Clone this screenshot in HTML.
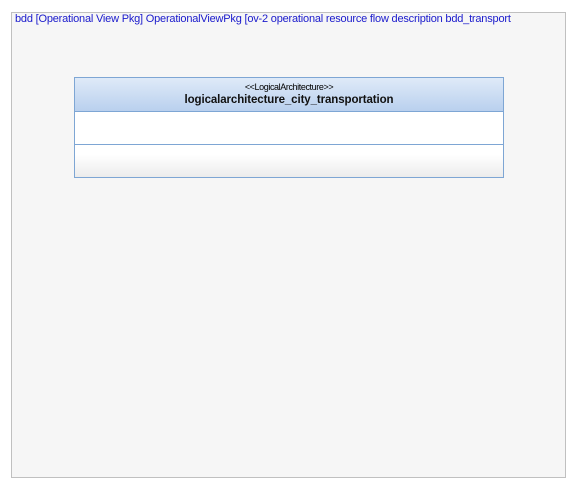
<!DOCTYPE html>
<html><head><meta charset="utf-8"><style>
body{margin:0;width:576px;height:488px;background:#fff;position:relative;overflow:hidden;font-family:"Liberation Sans",sans-serif}
.frame{position:absolute;left:11px;top:12px;width:553px;height:464px;border:1px solid #c0c0c0;background:#f6f6f6}
.title{position:absolute;left:12px;top:13px;height:13px;padding:0 0 0 3px;font-size:11px;line-height:13px;color:#1a1acc;white-space:nowrap;letter-spacing:-0.2px;width:497px;overflow:hidden}
.box{position:absolute;left:74px;top:77px;width:428px;height:99px;border:1px solid #7ea6d4;background:#fff;overflow:hidden}
.hdr{height:33px;border-bottom:1px solid #7ea6d4;background:linear-gradient(#dfeaf8,#b9d0ee);text-align:center}
.st{font-size:9px;line-height:10px;padding-top:4px;color:#000;letter-spacing:-0.4px}
.nm{font-size:11.5px;font-weight:bold;line-height:14px;color:#111;letter-spacing:-0.1px;padding-top:1px}
.c1{height:32px;border-bottom:1px solid #7ea6d4;background:#fff}
.c2{height:32px;background:linear-gradient(#fff 30%,#ececec)}
</style></head><body>
<div class="frame"></div>
<div class="title">bdd [Operational View Pkg] OperationalViewPkg [ov-2 operational resource flow description bdd_transport</div>
<div class="box"><div class="hdr"><div class="st">&lt;&lt;LogicalArchitecture&gt;&gt;</div><div class="nm">logicalarchitecture_city_transportation</div></div><div class="c1"></div><div class="c2"></div></div>
</body></html>
